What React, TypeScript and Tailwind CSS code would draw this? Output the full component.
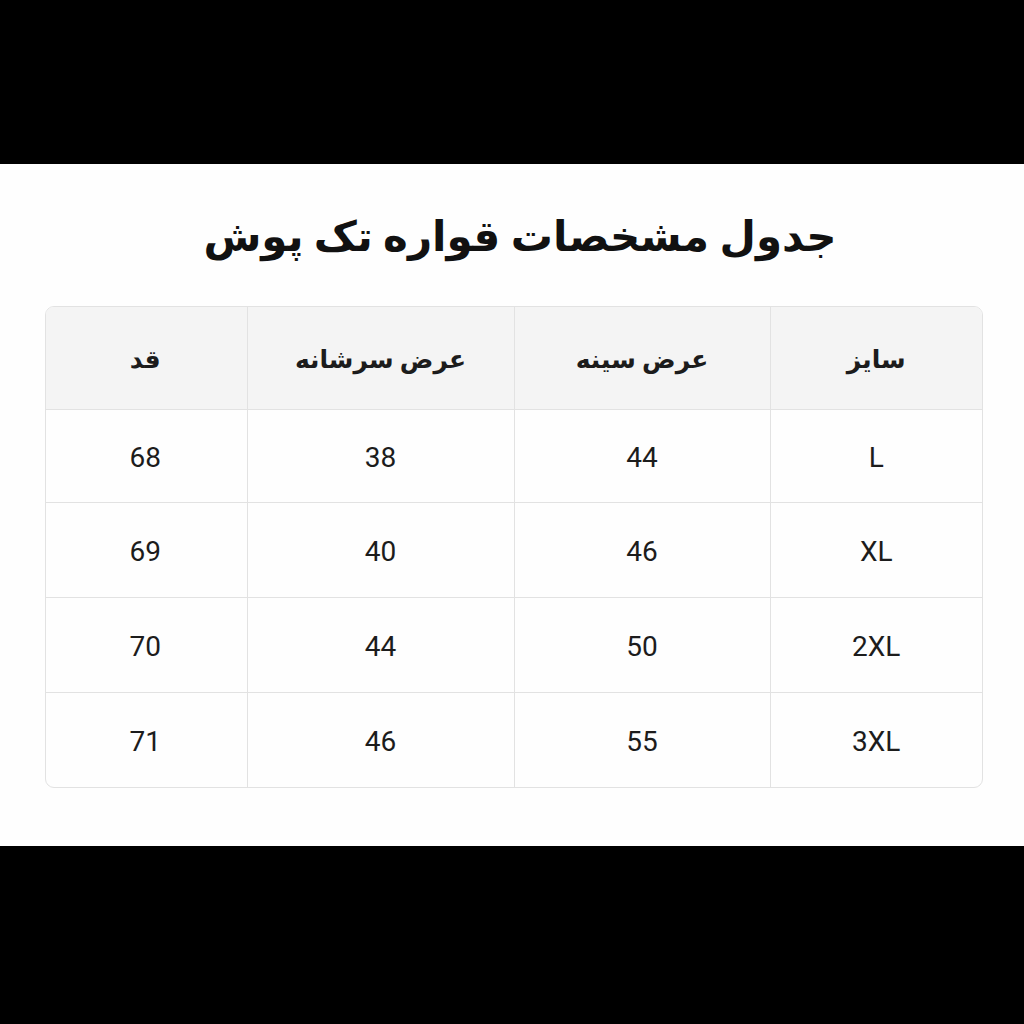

const headers = ["سایز", "عرض سینه", "عرض سرشانه", "قد"]

const rows = [
  ["L", "44", "38", "68"],
  ["XL", "46", "40", "69"],
  ["2XL", "50", "44", "70"],
  ["3XL", "55", "46", "71"],
]

// column widths, right → left
const colWidths = ["w-[212px]", "w-[256px]", "w-[267px]", "w-[203px]"]

export default function App() {
  return (
    <div className="min-h-screen w-[1024px] bg-black flex flex-col" style={{ fontFamily: "Roboto, 'DejaVu Sans', sans-serif" }}>
      <div className="h-[164px]" />
      <div className="h-[682px] bg-[#fefefe] flex flex-col items-center pl-[4px]" dir="rtl">
        <h1 className="mt-[43px] h-[99px] pl-[12px] text-[42px] font-bold text-[#111] leading-[60px]">
          جدول مشخصات قواره تک پوش
        </h1>
        <div className="w-[938px] border border-[#e2e2e2] rounded-[9px] overflow-hidden">
          <table className="w-full border-collapse table-fixed">
            <thead>
              <tr className="h-[102px] bg-[#f4f4f4]">
                {headers.map((h, i) => (
                  <th
                    key={h}
                    className={`${colWidths[i]} pt-[3px] text-[25px] font-bold text-[#1c1c1c] text-center border-l border-[#e2e2e2] last:border-l-0 border-b`}
                  >
                    {h}
                  </th>
                ))}
              </tr>
            </thead>
            <tbody>
              {rows.map((r, ri) => (
                <tr key={ri} className={ri === 0 ? "h-[93px]" : "h-[95px]"}>
                  {r.map((c, ci) => (
                    <td
                      key={ci}
                      className={`pt-[5px] text-center text-[28px] text-[#1c1c1c] border-l border-[#e2e2e2] last:border-l-0 ${ri < rows.length - 1 ? "border-b" : ""}`}
                    >
                      {c}
                    </td>
                  ))}
                </tr>
              ))}
            </tbody>
          </table>
        </div>
      </div>
      <div className="flex-1" />
    </div>
  )
}
